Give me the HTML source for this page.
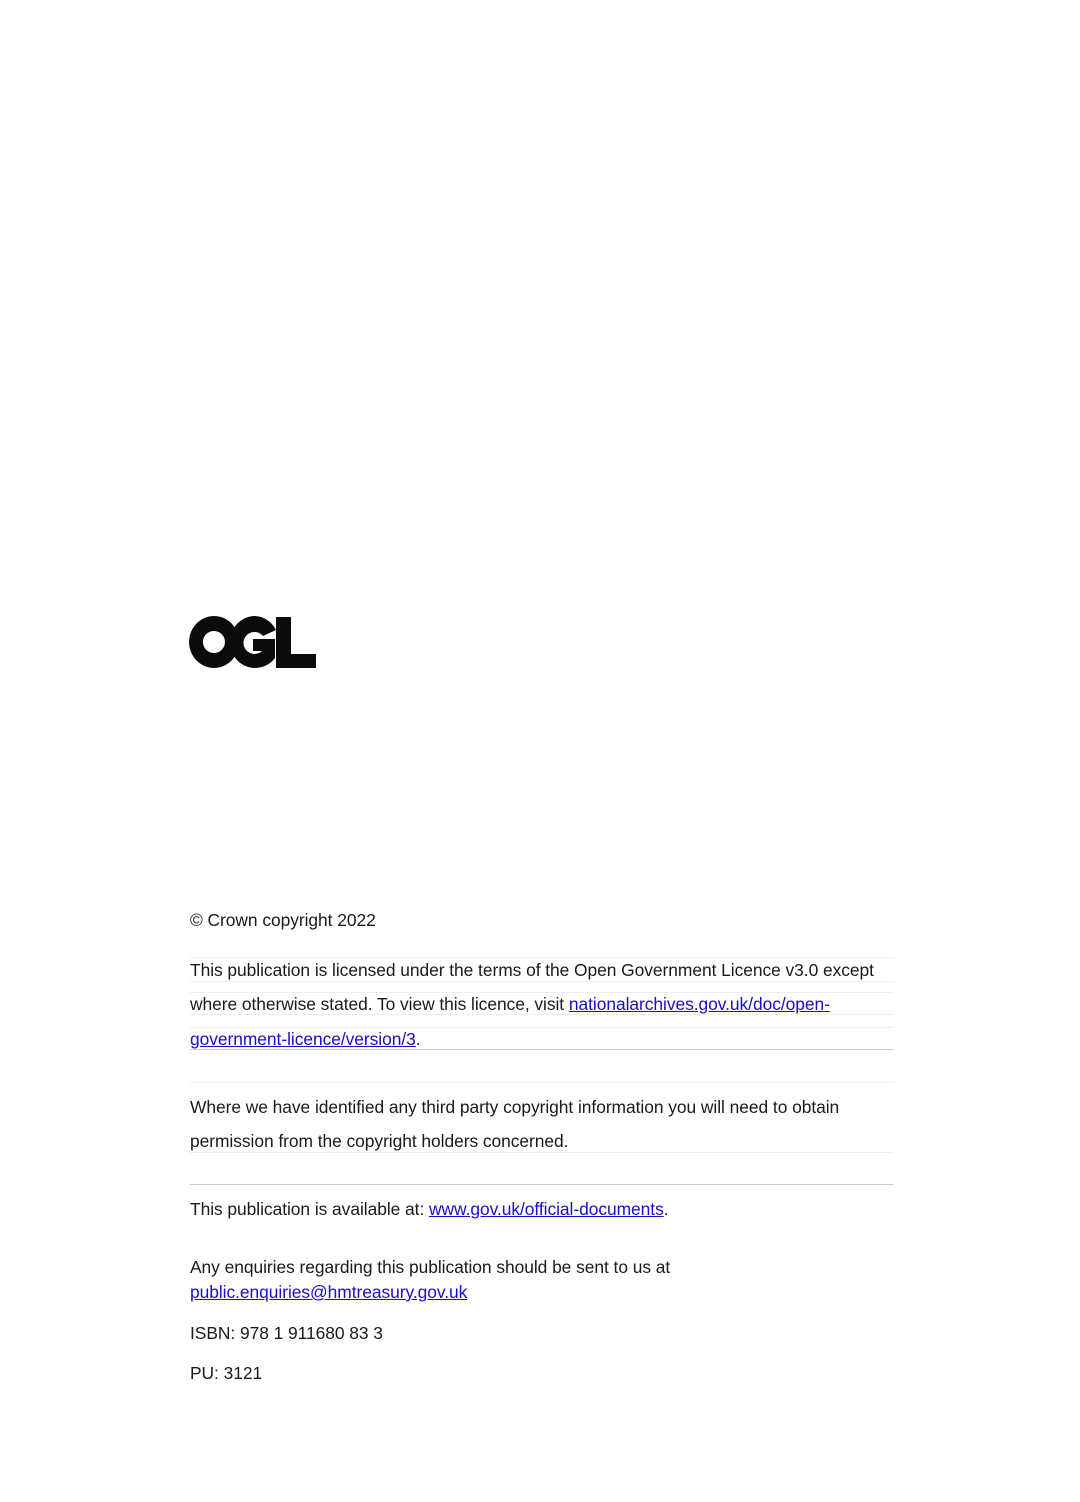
<!DOCTYPE html>
<html><head><meta charset="utf-8"><style>
body{margin:0;width:1080px;height:1502px;background:#fff;position:relative;overflow:hidden;font-family:"Liberation Sans",sans-serif;color:#1a1a1a}
.t{position:absolute;left:190px;font-size:17.4px;line-height:20px;white-space:nowrap;letter-spacing:-0.05px}
a{color:#1a0dcc;text-decoration:underline}
.l{position:absolute;left:190px;width:704px;height:1px;background:#eee}
.d{background:#ccc}
</style></head><body>
<svg style="position:absolute;left:0;top:0" width="400" height="700">
<path fill="#0b0b0b" fill-rule="evenodd" d="M214,616 a25,26 0 1,0 0.1,0 Z M214,631 a11,11 0 1,1 -0.1,0 Z"/>
<path fill="#0b0b0b" fill-rule="evenodd" d="M255,616 a25,26 0 0,0 0,52 a25,26 0 0,0 20,-10 L275,639 L253,639 L253,651 L262,651 a11,11 0 1,1 1,-15 L276,630 a25,26 0 0,0 -21,-14 Z"/>
<path fill="#0b0b0b" d="M276,617 L291,617 L291,654 L316,654 L316,668 L276,668 Z"/>
</svg>
<div class="t" style="top:910px">© Crown copyright 2022</div>
<div class="l" style="top:957px"></div>
<div class="t" style="top:960px">This publication is licensed under the terms of the Open Government Licence v3.0 except</div>
<div class="l" style="top:981px"></div>
<div class="l" style="top:992px"></div>
<div class="t" style="top:994px">where otherwise stated. To view this licence, visit <a>nationalarchives.gov.uk/doc/open-</a></div>
<div class="l" style="top:1014px"></div>
<div class="l" style="top:1027px"></div>
<div class="t" style="top:1029px"><a>government-licence/version/3</a>.</div>
<div class="l d" style="top:1049px"></div>
<div class="l" style="top:1082px"></div>
<div class="t" style="top:1097px">Where we have identified any third party copyright information you will need to obtain</div>
<div class="t" style="top:1131px">permission from the copyright holders concerned.</div>
<div class="l" style="top:1152px"></div>
<div class="l d" style="top:1184px"></div>
<div class="t" style="top:1199px">This publication is available at: <a>www.gov.uk/official-documents</a>.</div>
<div class="t" style="top:1257px">Any enquiries regarding this publication should be sent to us at</div>
<div class="t" style="top:1282px"><a>public.enquiries@hmtreasury.gov.uk</a></div>
<div class="t" style="top:1323px">ISBN: 978 1 911680 83 3</div>
<div class="t" style="top:1363px">PU: 3121</div>
</body></html>
